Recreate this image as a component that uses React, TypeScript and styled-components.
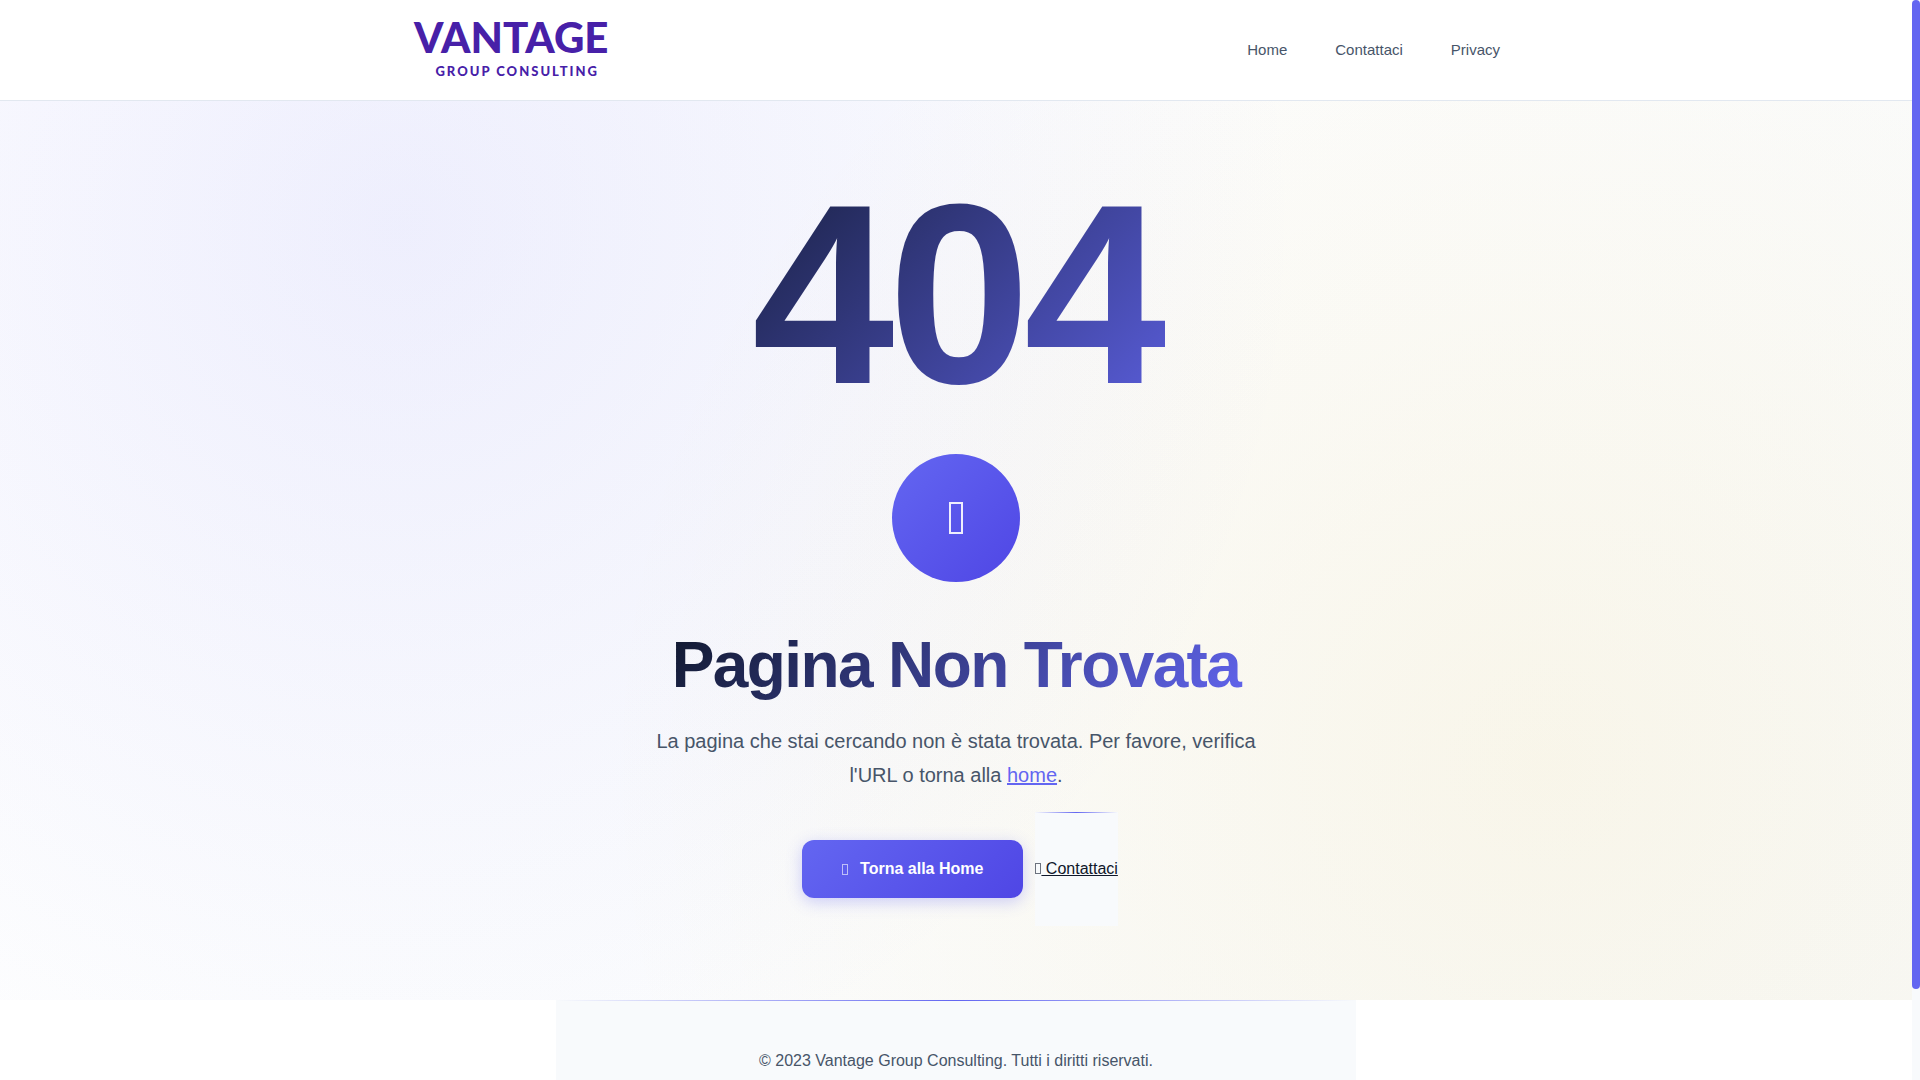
import React from "react";
import styled, { createGlobalStyle } from "styled-components";

const color = {
  ink: "#0f172a",
  slate: "#475569",
  line: "#e2e8f0",
  mist: "#f8fafc",
  indigo: "#6366f1",
  indigoDark: "#4f46e5",
  brand: "#4720a8",
};

const GlobalStyle = createGlobalStyle`
  *, *::before, *::after { box-sizing: border-box; }
  body {
    margin: 0;
    background: #fff;
    color: ${color.ink};
    font-family: "Liberation Sans", Arial, sans-serif;
    font-size: 16px;
    line-height: 26px;
  }
  h1, h2, p { margin: 0; }
`;

const Shell = styled.div`
  display: grid;
  grid-template-columns: minmax(0, 1fr) 8px;
  height: 100vh;
  overflow: hidden;
`;

const Scroller = styled.div`
  min-height: 0;
  overflow-y: auto;
  scrollbar-width: none;
`;

const Rail = styled.div`
  background: ${color.mist};
`;

const Thumb = styled.div`
  height: 91.6%;
  border-radius: 4px;
  background: ${color.indigo};
`;

const Header = styled.header`
  background: #fff;
  border-bottom: 1px solid ${color.line};
`;

const HeaderInner = styled.div`
  display: flex;
  align-items: center;
  justify-content: space-between;
  max-width: 1152px;
  min-height: 100px;
  margin: 0 auto;
  padding: 0 32px;
`;

const Logo = styled.a`
  display: flex;
  flex-direction: column;
  align-items: center;
  gap: 6px;
  padding: 0 0 4px 2px;
  color: ${color.brand};
  font-family: Lato, "Noto Sans", sans-serif;
  font-weight: 900;
  text-decoration: none;
`;

const LogoName = styled.span`
  font-size: 42px;
  line-height: 40px;
`;

const LogoTag = styled.span`
  padding-left: 12px;
  font-size: 13px;
  letter-spacing: 2px;
  line-height: 16px;
`;

const Nav = styled.nav`
  display: flex;
  gap: 48px;
`;

const NavLink = styled.a`
  color: ${color.slate};
  font-size: 15px;
  text-decoration: none;
`;

const Hero = styled.main`
  display: flex;
  flex-direction: column;
  align-items: center;
  padding: 65px 24px 74px;
  text-align: center;
  background:
    radial-gradient(circle 900px at 21% 14%, rgba(99, 102, 241, 0.1) 0%, transparent 100%),
    radial-gradient(circle 950px at 81% 74%, rgba(234, 179, 8, 0.08) 0%, transparent 100%),
    linear-gradient(135deg, #ffffff 0%, ${color.mist} 100%);
`;

const HeroText = styled.div`
  display: flex;
  flex-direction: column;
  width: 100%;
  max-width: 600px;
`;

const GradientText = styled.span`
  background: linear-gradient(135deg, ${color.ink} 0%, ${color.indigo} 100%);
  background-clip: text;
  -webkit-background-clip: text;
  color: transparent;
`;

const Code = styled(GradientText)`
  font-size: 256px;
  font-weight: 700;
  letter-spacing: -0.025em;
  line-height: 256px;
`;

const Badge = styled.div`
  display: flex;
  align-items: center;
  align-self: center;
  justify-content: center;
  width: 128px;
  height: 128px;
  margin: 32px 0 48px;
  border-radius: 50%;
  background: linear-gradient(135deg, ${color.indigo}, ${color.indigoDark});
  color: #fff;
`;

const Title = styled(GradientText).attrs({ as: "h1" })`
  font-size: 64px;
  font-weight: 700;
  letter-spacing: -0.025em;
  line-height: 70px;
`;

const Lead = styled.p`
  margin: 24px 0 20px;
  color: ${color.slate};
  font-size: 20px;
  line-height: 34px;
`;

const TextLink = styled.a`
  color: ${color.indigo};
`;

const Actions = styled.div`
  display: flex;
  align-items: center;
  gap: 4px;
`;

const PrimaryLink = styled.a`
  display: flex;
  align-items: center;
  gap: 12px;
  margin: 0 8px;
  padding: 16px 40px;
  border-radius: 12px;
  background: linear-gradient(135deg, ${color.indigo}, ${color.indigoDark});
  box-shadow: 0 4px 16px rgba(99, 102, 241, 0.3);
  color: #fff;
  font-weight: 700;
  text-decoration: none;
`;

const hairline = `
  background:
    linear-gradient(90deg, transparent, ${color.indigo}, transparent) top / 100% 1px no-repeat,
    ${color.mist};
`;

const SecondaryLink = styled.a`
  padding: 48px 0;
  color: ${color.ink};
  line-height: 18px;
  ${hairline}
`;

const Glyph = styled.i<{ $large?: boolean }>`
  display: inline-block;
  width: ${({ $large }) => ($large ? 14 : 6)}px;
  height: ${({ $large }) => ($large ? 32 : 11)}px;
  border: ${({ $large }) => ($large ? 2 : 1)}px solid currentColor;
  opacity: ${({ $large }) => ($large ? 0.9 : 0.6)};
`;

const Footer = styled.footer`
  max-width: 800px;
  margin: 0 auto;
  padding: 48px 24px 105px;
  color: ${color.slate};
  text-align: center;
  ${hairline}
`;

const navItems = ["Home", "Contattaci", "Privacy"];

export default function App() {
  return (
    <Shell>
      <GlobalStyle />
      <Scroller>
        <Header>
          <HeaderInner>
            <Logo href="#home">
              <LogoName>VANTAGE</LogoName>
              <LogoTag>GROUP CONSULTING</LogoTag>
            </Logo>
            <Nav>
              {navItems.map((item) => (
                <NavLink key={item} href={`#${item.toLowerCase()}`}>
                  {item}
                </NavLink>
              ))}
            </Nav>
          </HeaderInner>
        </Header>
        <Hero>
          <HeroText>
            <Code>404</Code>
            <Badge>
              <Glyph $large aria-hidden="true" />
            </Badge>
            <Title>Pagina Non Trovata</Title>
            <Lead>
              La pagina che stai cercando non è stata trovata. Per favore, verifica l'URL o torna alla{" "}
              <TextLink href="#home">home</TextLink>.
            </Lead>
          </HeroText>
          <Actions>
            <PrimaryLink href="#home">
              <Glyph aria-hidden="true" />
              Torna alla Home
            </PrimaryLink>
            <SecondaryLink href="#contattaci">
              <Glyph aria-hidden="true" /> Contattaci
            </SecondaryLink>
          </Actions>
        </Hero>
        <Footer>
          <p>© 2023 Vantage Group Consulting. Tutti i diritti riservati.</p>
        </Footer>
      </Scroller>
      <Rail aria-hidden="true">
        <Thumb />
      </Rail>
    </Shell>
  );
}
